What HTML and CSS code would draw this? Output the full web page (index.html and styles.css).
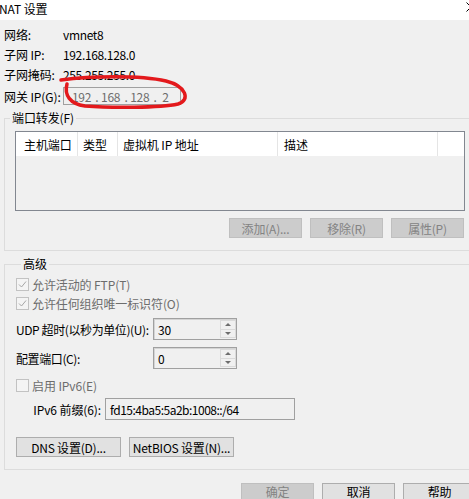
FILE: index.html
```html
<!DOCTYPE html>
<html lang="zh-CN">
<head>
<meta charset="utf-8">
<title>NAT 设置</title>
<link rel="stylesheet" href="styles.css">
</head>
<body>
<div class="titlebar">
  <span class="title">NAT 设置</span>
  <svg class="close" width="10" height="10" viewBox="0 0 10 10"><path d="M0.5 0.5 L9.5 9.5 M9.5 0.5 L0.5 9.5" stroke="#000" stroke-width="1" fill="none"/></svg>
</div>
<main class="dialog">
  <div class="info">
    <div class="row"><span class="lbl">网络:</span><span class="val">vmnet8</span></div>
    <div class="row"><span class="lbl">子网 IP:</span><span class="val">192.168.128.0</span></div>
    <div class="row"><span class="lbl">子网掩码:</span><span class="val">255.255.255.0</span></div>
    <div class="row gw"><span class="lbl">网关 IP(G):</span>
      <div class="ipbox"><span class="oct">192</span><span class="dot">.</span><span class="oct">168</span><span class="dot">.</span><span class="oct">128</span><span class="dot">.</span><span class="oct last">2</span></div>
    </div>
  </div>

  <fieldset class="group port">
    <legend>端口转发(F)</legend>
    <div class="list">
      <div class="lhead">
        <span class="col c1">主机端口</span>
        <span class="col c2">类型</span>
        <span class="col c3">虚拟机 IP 地址</span>
        <span class="col c4">描述</span>
        <span class="col c5"></span>
      </div>
    </div>
    <div class="btnrow">
      <button class="btn off" disabled>添加(A)...</button>
      <button class="btn off" disabled>移除(R)</button>
      <button class="btn off" disabled>属性(P)</button>
    </div>
  </fieldset>

  <fieldset class="group adv">
    <legend>高级</legend>
    <div class="check first"><span class="box"><svg width="11" height="11" viewBox="0 0 11 11"><path d="M2 5.5 L4.5 8 L9 2.5" stroke="#a6a6a6" stroke-width="1" fill="none"/></svg></span><span class="ctext">允许活动的 FTP(T)</span></div>
    <div class="check"><span class="box"><svg width="11" height="11" viewBox="0 0 11 11"><path d="M2 5.5 L4.5 8 L9 2.5" stroke="#a6a6a6" stroke-width="1" fill="none"/></svg></span><span class="ctext">允许任何组织唯一标识符(O)</span></div>

    <div class="spinrow s1"><span class="slbl">UDP 超时(以秒为单位)(U):</span>
      <div class="spin"><span class="sval">30</span><span class="sbtns"><span class="sb up"></span><span class="sb down"></span></span></div>
    </div>
    <div class="spinrow s2"><span class="slbl">配置端口(C):</span>
      <div class="spin"><span class="sval">0</span><span class="sbtns"><span class="sb up"></span><span class="sb down"></span></span></div>
    </div>

    <div class="check v6"><span class="box"></span><span class="ctext">启用 IPv6(E)</span></div>

    <div class="prefix"><span class="plbl">IPv6 前缀(6):</span><div class="pbox">fd15:4ba5:5a2b:1008::/64</div></div>

    <div class="dnsrow">
      <button class="btn wide">DNS 设置(D)...</button>
      <button class="btn wide">NetBIOS 设置(N)...</button>
    </div>
  </fieldset>

  <div class="footer">
    <button class="btn off" disabled>确定</button>
    <button class="btn">取消</button>
    <button class="btn">帮助</button>
  </div>
</main>
<svg class="annot" width="469" height="499" viewBox="0 0 469 499">
  <path d="M61 80 C 90 76, 140 75, 166 81 C 186 86, 191 100, 178 104 C 160 108, 110 108, 85 106 C 70 104, 64 95, 67 84" stroke="#e3191c" stroke-width="3.5" fill="none" stroke-linecap="round"/>
</svg>
</body>
</html>
```
FILE: styles.css
```css
* { box-sizing: border-box; }
html, body { margin: 0; padding: 0; }
body {
  width: 469px;
  height: 499px;
  overflow: hidden;
  position: relative;
  background: #f0f0f0;
  font-family: "Noto Sans CJK SC", "Noto Sans", sans-serif;
  font-size: 12px;
  letter-spacing: -0.1px;
  color: #000;
}
.titlebar {
  height: 20px;
  background: #fff;
  display: flex;
  justify-content: space-between;
  align-items: flex-start;
}
.title { line-height: 17px; margin-left: -1px; }
.close { margin-top: 2px; margin-right: -7px; flex: none; }

.dialog { padding-left: 4px; }

.info { padding-top: 4px; }
.row { display: flex; align-items: center; height: 20px; }
.lbl { width: 59px; flex: none; }
.val { letter-spacing: -0.35px; }
.row.gw { margin-top: 3px; height: 18px; }
.ipbox {
  width: 118px;
  height: 18px;
  border: 1px solid #a0a0a0;
  display: flex;
  align-items: center;
  padding-left: 8px;
  color: #6d6d6d;
  letter-spacing: -0.3px;
}
.oct { width: 21px; }
.dot { width: 8.5px; text-align: center; }
.oct.last { padding-left: 3px; }

.group {
  margin: 0 -12px 0 0;
  padding: 0;
  border: 1px solid #dcdcdc;
  min-width: 0;
}
.group legend {
  margin-left: 5px;
  padding: 0 2px;
  line-height: 14px;
}
.port { margin-top: 6px; padding-bottom: 12px; }

.list {
  margin: 6px 0 0 10px;
  width: 450px;
  height: 80px;
  border: 1px solid #828790;
}
.lhead { display: flex; height: 24px; background: #fff; }
.col {
  display: flex;
  align-items: center;
  height: 24px;
  border-right: 1px solid #e5e5e5;
  padding-left: 5px;
  white-space: nowrap;
}
.c1 { width: 62px; padding-left: 8px; }
.c2 { width: 40px; }
.c3 { width: 160px; }
.c4 { width: 160px; padding-left: 6px; }
.c5 { flex: 1; border-right: none; }

.btnrow {
  display: flex;
  justify-content: flex-end;
  gap: 8px;
  width: 449px;
  margin: 7px 0 0 10px;
}
.btn {
  width: 73px;
  height: 20px;
  padding: 0;
  border: 1px solid #adadad;
  background: #e1e1e1;
  font-family: inherit;
  font-size: 12px;
  letter-spacing: -0.2px;
  color: #000;
  flex: none;
}
.btn.off { background: #cccccc; border-color: #bfbfbf; color: #838383; }

.adv { margin-top: 6px; padding: 0 0 12px 11px; }
.check { display: flex; align-items: center; height: 19px; gap: 3px; color: #6d6d6d; }
.check.first { margin-top: 4px; }
.check.v6 { margin-top: 7px; }
.box {
  width: 13px;
  height: 13px;
  border: 1px solid #c2c2c2;
  background: #f4f4f4;
  display: flex;
  align-items: center;
  justify-content: center;
  flex: none;
}
.box svg { display: block; }

.spinrow { display: flex; align-items: center; }
.spinrow.s1 { margin-top: 5px; }
.spinrow.s2 { margin-top: 7px; }
.slbl { width: 137px; flex: none; white-space: nowrap; letter-spacing: -0.4px; }
.spin {
  width: 84px;
  height: 22px;
  border: 1px solid #a0a0a0;
  box-shadow: inset 1px 1px 0 #d4d4d4;
  display: flex;
  align-items: stretch;
  background: #f0f0f0;
}
.sval { flex: 1; padding-left: 4px; display: flex; align-items: center; }
.sbtns { width: 16px; display: flex; flex-direction: column; padding: 1px 0; }
.sb {
  flex: 1;
  border: 1px solid #dadada;
  background: #f0f0f0;
  display: flex;
  align-items: center;
  justify-content: center;
}
.sb.down { border-top: none; }
.sb.up::after {
  content: "";
  border-left: 3px solid transparent;
  border-right: 3px solid transparent;
  border-bottom: 3px solid #6d6d6d;
}
.sb.down::after {
  content: "";
  border-left: 3px solid transparent;
  border-right: 3px solid transparent;
  border-top: 3px solid #6d6d6d;
}

.prefix { display: flex; align-items: center; margin-top: 3px; gap: 4px; }
.plbl { width: 85px; text-align: right; white-space: nowrap; }
.pbox {
  width: 190px;
  height: 22px;
  border: 1px solid #a0a0a0;
  padding-left: 4px;
  display: flex;
  align-items: center;
  letter-spacing: -0.5px;
}

.dnsrow { display: flex; gap: 8px; margin-top: 17px; }
.btn.wide { width: 105px; }

.footer {
  display: flex;
  justify-content: flex-end;
  gap: 8px;
  margin-top: 13px;
  margin-right: -7px;
}
.footer .btn { height: 16px; border-bottom: none; line-height: 14px; }

.annot { position: absolute; left: 0; top: 0; pointer-events: none; }
```
